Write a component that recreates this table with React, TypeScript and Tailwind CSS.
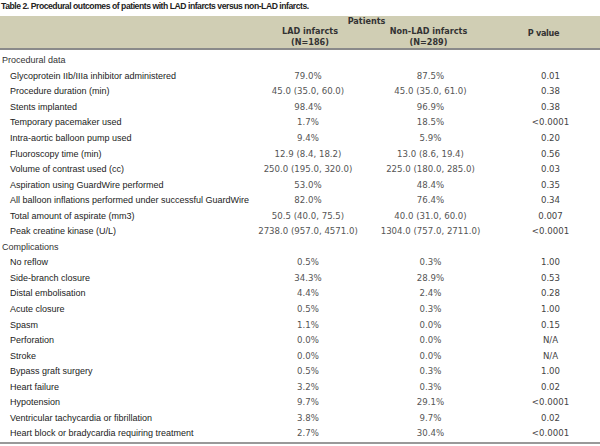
import React from "react";

type Row = { label: string; a?: string; b?: string; p?: string; section?: boolean };

const rows: Row[] = [
  { label: "Procedural data", section: true },
  { label: "Glycoprotein IIb/IIIa inhibitor administered", a: "79.0%", b: "87.5%", p: "0.01" },
  { label: "Procedure duration (min)", a: "45.0 (35.0, 60.0)", b: "45.0 (35.0, 61.0)", p: "0.38" },
  { label: "Stents implanted", a: "98.4%", b: "96.9%", p: "0.38" },
  { label: "Temporary pacemaker used", a: "1.7%", b: "18.5%", p: "<0.0001" },
  { label: "Intra-aortic balloon pump used", a: "9.4%", b: "5.9%", p: "0.20" },
  { label: "Fluoroscopy time (min)", a: "12.9 (8.4, 18.2)", b: "13.0 (8.6, 19.4)", p: "0.56" },
  { label: "Volume of contrast used (cc)", a: "250.0 (195.0, 320.0)", b: "225.0 (180.0, 285.0)", p: "0.03" },
  { label: "Aspiration using GuardWire performed", a: "53.0%", b: "48.4%", p: "0.35" },
  { label: "All balloon inflations performed under successful GuardWire", a: "82.0%", b: "76.4%", p: "0.34" },
  { label: "Total amount of aspirate (mm3)", a: "50.5 (40.0, 75.5)", b: "40.0 (31.0, 60.0)", p: "0.007" },
  { label: "Peak creatine kinase (U/L)", a: "2738.0 (957.0, 4571.0)", b: "1304.0 (757.0, 2711.0)", p: "<0.0001" },
  { label: "Complications", section: true },
  { label: "No reflow", a: "0.5%", b: "0.3%", p: "1.00" },
  { label: "Side-branch closure", a: "34.3%", b: "28.9%", p: "0.53" },
  { label: "Distal embolisation", a: "4.4%", b: "2.4%", p: "0.28" },
  { label: "Acute closure", a: "0.5%", b: "0.3%", p: "1.00" },
  { label: "Spasm", a: "1.1%", b: "0.0%", p: "0.15" },
  { label: "Perforation", a: "0.0%", b: "0.0%", p: "N/A" },
  { label: "Stroke", a: "0.0%", b: "0.0%", p: "N/A" },
  { label: "Bypass graft surgery", a: "0.5%", b: "0.3%", p: "1.00" },
  { label: "Heart failure", a: "3.2%", b: "0.3%", p: "0.02" },
  { label: "Hypotension", a: "9.7%", b: "29.1%", p: "<0.0001" },
  { label: "Ventricular tachycardia or fibrillation", a: "3.8%", b: "9.7%", p: "0.02" },
  { label: "Heart block or bradycardia requiring treatment", a: "2.7%", b: "30.4%", p: "<0.0001" },
];

export default function App() {
  return (
    <div
      className="w-[600px] h-[446px] bg-white text-[#333] overflow-hidden"
      style={{ fontFamily: '"Liberation Sans", Arial, sans-serif' }}
    >
      <div className="h-[16px] pl-[1px] pt-[1px] text-[8.6px] font-bold leading-[11px] tracking-[-0.45px] text-[#222] whitespace-nowrap">
        Table 2. Procedural outcomes of patients with LAD infarcts versus non-LAD infarcts.
      </div>
      <div
        className="bg-[#d0ceb4] h-[34px] border-b-2 border-[#8a8a8a] grid grid-cols-[250px_120px_117px_1fr] text-[9px] font-bold text-[#333] leading-[11px]"
        style={{ fontFamily: '"DejaVu Sans Condensed", "DejaVu Sans", sans-serif' }}
      >
        <div />
        <div className="col-span-2 flex flex-col items-center">
          <div className="h-[11px] -mb-[1px] pr-[4px]">Patients</div>
          <div className="grid grid-cols-[120px_117px] w-full">
            <div className="flex flex-col items-center">
              <div>LAD infarcts</div>
              <div>(N=186)</div>
            </div>
            <div className="flex flex-col items-center">
              <div>Non-LAD infarcts</div>
              <div>(N=289)</div>
            </div>
          </div>
        </div>
        <div className="flex items-center justify-center pt-[3px] tracking-[-0.3px]">P value</div>
      </div>
      <div className="pt-[3px] border-b-2 border-[#999]">
        {rows.map((r, i) => (
          <div
            key={i}
            className="grid grid-cols-[250px_120px_117px_1fr] h-[15.55px] items-center text-[9px] leading-[11px]"
          >
            {r.section ? (
              <div className="pl-[2px] text-[#333] whitespace-nowrap">{r.label}</div>
            ) : (
              <>
                <div className="pl-[10px] text-[#222] whitespace-nowrap">{r.label}</div>
                <div className="text-center text-[#555] whitespace-nowrap font-['DejaVu_Sans'] text-[8.6px] pr-[4px]">{r.a}</div>
                <div className="text-center text-[#555] whitespace-nowrap font-['DejaVu_Sans'] text-[8.6px] pl-[4px]">{r.b}</div>
                <div className="text-center text-[#444] whitespace-nowrap font-['DejaVu_Sans'] text-[8.6px] pl-[14px]">{r.p}</div>
              </>
            )}
          </div>
        ))}
      </div>
    </div>
  );
}
